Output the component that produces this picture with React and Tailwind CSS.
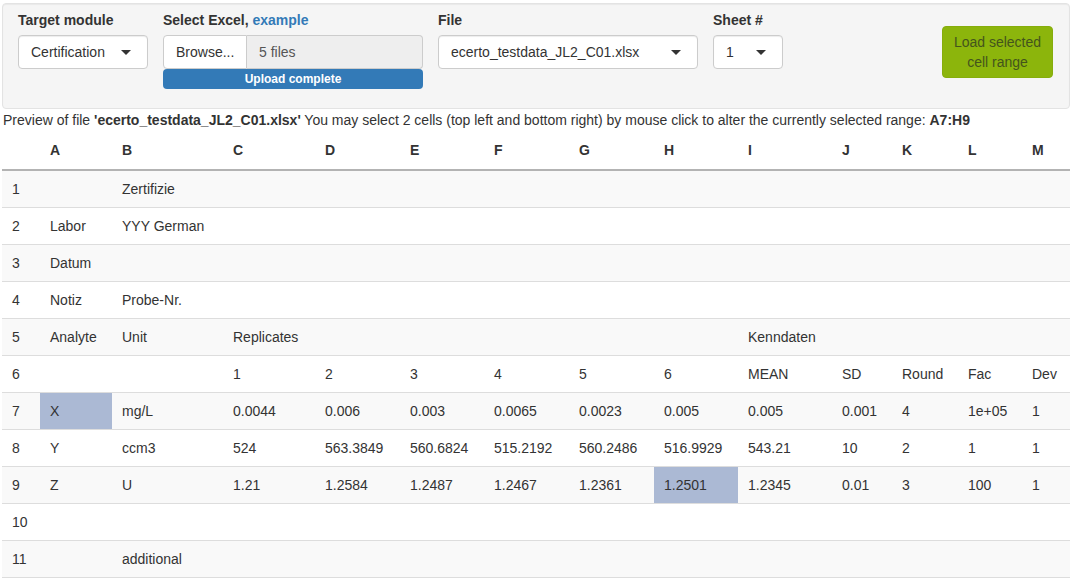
import React from 'react';

const COLS = ['', 'A', 'B', 'C', 'D', 'E', 'F', 'G', 'H', 'I', 'J', 'K', 'L', 'M'];
const WIDTHS = [38, 72, 111, 92, 85, 84, 85, 85, 84, 94, 60, 66, 64, 48];

const ROWS = [
  ['1', '', 'Zertifizie'],
  ['2', 'Labor', 'YYY German'],
  ['3', 'Datum'],
  ['4', 'Notiz', 'Probe-Nr.'],
  ['5', 'Analyte', 'Unit', 'Replicates', '', '', '', '', '', 'Kenndaten'],
  ['6', '', '', '1', '2', '3', '4', '5', '6', 'MEAN', 'SD', 'Round', 'Fac', 'Dev'],
  ['7', 'X', 'mg/L', '0.0044', '0.006', '0.003', '0.0065', '0.0023', '0.005', '0.005', '0.001', '4', '1e+05', '1'],
  ['8', 'Y', 'ccm3', '524', '563.3849', '560.6824', '515.2192', '560.2486', '516.9929', '543.21', '10', '2', '1', '1'],
  ['9', 'Z', 'U', '1.21', '1.2584', '1.2487', '1.2467', '1.2361', '1.2501', '1.2345', '0.01', '3', '100', '1'],
  ['10'],
  ['11', '', 'additional'],
];

// selected range corners
const isMarked = (r, c) => (r === 6 && c === 1) || (r === 8 && c === 8);

function Caret() {
  return <span className="w-0 h-0 border-x-[5px] border-t-[5px] border-x-transparent border-t-[#333]" />;
}

function Select({ value, width }) {
  return (
    <div className={`${width} h-[34px] flex items-center justify-between bg-white border border-[#ccc] rounded-[4px] pl-[12px] pr-[16px] shadow-[inset_0_1px_1px_rgba(0,0,0,0.075)]`}>
      <span className="text-[14px] leading-[20px] text-[#333]">{value}</span>
      <Caret />
    </div>
  );
}

export default function App() {
  return (
    <div className="w-[1072px] min-h-[583px] bg-white px-[2px] pt-[3px] font-['Liberation_Sans',Arial,sans-serif] text-[14px] text-[#333]">
      {/* Controls */}
      <div className="h-[106px] bg-[#f5f5f5] border border-[#e3e3e3] rounded-[4px] shadow-[inset_0_1px_1px_rgba(0,0,0,0.05)] pt-[6px] pl-[15px] flex items-start gap-[15px]">
        <div>
          <div className="font-bold leading-[20px] mb-[5px]">Target module</div>
          <Select value="Certification" width="w-[130px]" />
        </div>
        <div>
          <div className="font-bold leading-[20px] mb-[5px]">
            Select Excel, <span className="text-[#337ab7]">example</span>
          </div>
          <div className="w-[260px] flex h-[34px]">
            <div className="w-[84px] shrink-0 bg-white border border-[#ccc] rounded-l-[4px] flex items-center pl-[12px] leading-[20px]">Browse...</div>
            <div className="flex-1 bg-[#eee] border border-l-0 border-[#ccc] rounded-r-[4px] flex items-center pl-[12px] text-[#555]">5 files</div>
          </div>
          <div className="w-[260px] h-[20px] bg-[#337ab7] rounded-[4px] text-white text-[12px] font-bold leading-[20px] text-center">Upload complete</div>
        </div>
        <div>
          <div className="font-bold leading-[20px] mb-[5px]">File</div>
          <Select value="ecerto_testdata_JL2_C01.xlsx" width="w-[260px]" />
        </div>
        <div>
          <div className="font-bold leading-[20px] mb-[5px]">Sheet #</div>
          <Select value="1" width="w-[70px]" />
        </div>
        <button className="ml-[144px] mt-[16px] w-[111px] h-[52px] bg-[#8cb50c] border border-[#86ad0c] rounded-[4px] text-[#44541c] leading-[20px] text-center">
          Load selected<br />cell range
        </button>
      </div>

      {/* Preview info */}
      <div className="leading-[20px] pl-[1px] mt-[1px]">
        Preview of file <b>'ecerto_testdata_JL2_C01.xlsx'</b> You may select 2 cells (top left and bottom right) by mouse click to alter the currently selected range: <b>A7:H9</b>
      </div>

      {/* Sheet preview */}
      <table className="mt-[1px] w-[1068px] table-fixed border-collapse">
        <colgroup>
          {WIDTHS.map((w, i) => (
            <col key={i} style={{ width: w }} />
          ))}
        </colgroup>
        <thead>
          <tr className="border-b-2 border-[#b3b3b3]">
            {COLS.map((c, i) => (
              <th key={i} className="text-left font-bold px-[10px] py-[9px] leading-[20px]">{c}</th>
            ))}
          </tr>
        </thead>
        <tbody>
          {ROWS.map((row, r) => (
            <tr key={r} className={`${r % 2 === 0 ? 'bg-[#f9f9f9]' : 'bg-white'} ${r === 0 ? '' : 'border-t border-[#ddd]'} ${r === ROWS.length - 1 ? 'border-b border-[#b3b3b3]' : ''}`}>
              {COLS.map((_, c) => (
                <td key={c} className={`px-[10px] py-[8px] leading-[20px] whitespace-nowrap ${isMarked(r, c) ? 'bg-[#abb9d4]' : ''}`}>
                  {row[c] || ''}
                </td>
              ))}
            </tr>
          ))}
        </tbody>
      </table>
    </div>
  );
}
